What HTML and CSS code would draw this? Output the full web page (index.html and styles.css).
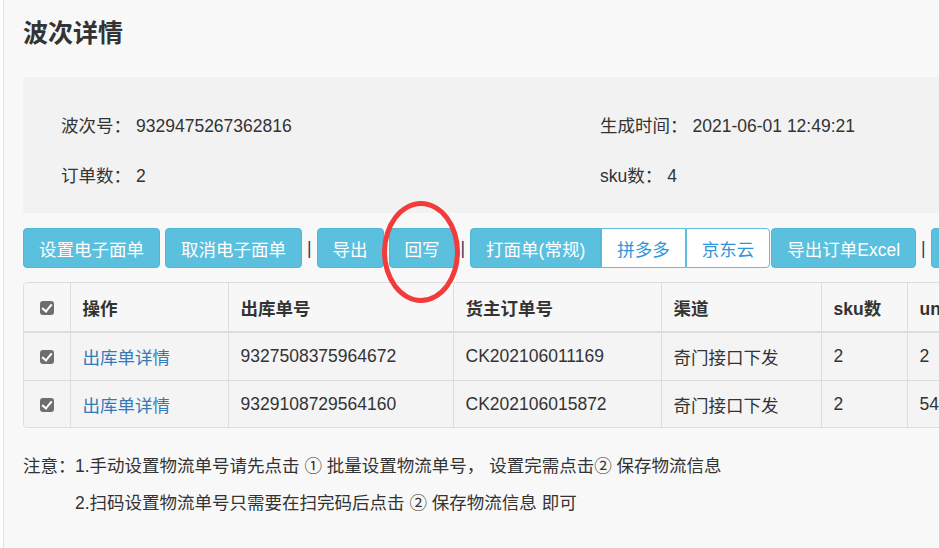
FILE: index.html
```html
<!DOCTYPE html>
<html lang="zh-CN">
<head>
    <meta charset="UTF-8">
    <meta name="viewport" content="width=device-width, initial-scale=1.0">
    <title>波次详情</title>
    <link rel="stylesheet" href="styles.css">
</head>
<body>
    <div class="page">
        <h1 class="title">波次详情</h1>

        <div class="info">
            <div class="info-item"><span class="label">波次号：</span>9329475267362816</div>
            <div class="info-item"><span class="label">生成时间：</span>2021-06-01 12:49:21</div>
            <div class="info-item"><span class="label">订单数：</span>2</div>
            <div class="info-item"><span class="label">sku数：</span>4</div>
        </div>

        <div class="toolbar">
            <button class="btn">设置电子面单</button>
            <button class="btn">取消电子面单</button>
            <span class="sep">|</span>
            <button class="btn">导出</button>
            <button class="btn">回写</button>
            <span class="sep">|</span>
            <div class="btn-group">
                <button class="btn">打面单(常规)</button>
                <button class="btn btn-plain">拼多多</button>
                <button class="btn btn-plain">京东云</button>
            </div>
            <button class="btn btn-join">导出订单Excel</button>
            <span class="sep">|</span>
            <button class="btn">批量设置物流单号</button>
        </div>

        <div class="table-wrap">
            <table class="grid">
                <thead>
                    <tr>
                        <th class="col-check"><span class="check"></span></th>
                        <th class="col-op">操作</th>
                        <th class="col-out">出库单号</th>
                        <th class="col-owner">货主订单号</th>
                        <th class="col-channel">渠道</th>
                        <th class="col-sku">sku数</th>
                        <th>unit数</th>
                    </tr>
                </thead>
                <tbody>
                    <tr>
                        <td class="col-check"><span class="check"></span></td>
                        <td><a href="#" class="link">出库单详情</a></td>
                        <td>9327508375964672</td>
                        <td>CK202106011169</td>
                        <td>奇门接口下发</td>
                        <td>2</td>
                        <td>2</td>
                    </tr>
                    <tr>
                        <td class="col-check"><span class="check"></span></td>
                        <td><a href="#" class="link">出库单详情</a></td>
                        <td>9329108729564160</td>
                        <td>CK202106015872</td>
                        <td>奇门接口下发</td>
                        <td>2</td>
                        <td>54</td>
                    </tr>
                </tbody>
            </table>
        </div>

        <div class="notes">
            <span class="notes-label">注意：</span>
            <div class="notes-list">
                <div>1.手动设置物流单号请先点击 ① 批量设置物流单号， 设置完需点击② 保存物流信息</div>
                <div>2.扫码设置物流单号只需要在扫完码后点击 ② 保存物流信息 即可</div>
            </div>
        </div>

        <div class="mark"></div>
    </div>
</body>
</html>
```

FILE: styles.css
```css
body {
    margin: 0;
    background: #ffffff;
    overflow: hidden;
    font-family: "Liberation Sans", "Noto Sans CJK SC", sans-serif;
    font-size: 17.5px;
    color: #333333;
}
.page {
    position: relative;
    margin-left: 3px;
    border-left: 1px solid #e2e2e2;
    background: #f8f8f8;
    min-height: 100vh;
    padding: 18px 0 0 19px;
    box-sizing: border-box;
}
.title {
    margin: 0;
    font-size: 25px;
    line-height: 30px;
    font-weight: bold;
    color: #333333;
}
.info {
    margin-top: 29px;
    background: #f2f2f2;
    height: 136px;
    box-sizing: border-box;
    padding: 24px 0 12px 38px;
    display: grid;
    grid-template-columns: 539px 1fr;
    grid-auto-rows: 50px;
    width: 1100px;
}
.info-item {
    line-height: 50px;
    white-space: nowrap;
}
.label {
    margin-right: 5px;
}
.toolbar {
    margin-top: 15px;
    display: flex;
    align-items: center;
    gap: 5px;
    white-space: nowrap;
    width: 1200px;
}
.btn {
    height: 40px;
    padding: 0 15px;
    font-family: inherit;
    font-size: 17.5px;
    color: #ffffff;
    background: #5bc0de;
    border: 1px solid #4fb6d6;
    border-radius: 4px;
    flex-shrink: 0;
}
.btn-group {
    display: flex;
}
.btn-group .btn {
    border-radius: 0;
}
.btn-group .btn:first-child {
    border-radius: 4px 0 0 4px;
}
.btn-group .btn:last-child {
    border-radius: 0 4px 4px 0;
}
.btn-plain {
    background: #ffffff;
    color: #2f95d8;
    border-color: #5bc0de;
}
.btn-join {
    margin-left: -4px;
}
.sep {
    color: #333a66;
}
.table-wrap {
    margin-top: 14px;
    width: 1100px;
    border: 1px solid #dddddd;
    border-radius: 4px;
    overflow: hidden;
    background: #f5f5f5;
}
.grid {
    width: 100%;
    border-collapse: collapse;
}
.grid th,
.grid td {
    text-align: left;
    padding: 0 12px;
    border-left: 1px solid #dddddd;
    white-space: nowrap;
}
.grid th:first-child,
.grid td:first-child {
    border-left: none;
}
.grid th {
    height: 48px;
    font-weight: bold;
    background: #f7f7f7;
    border-bottom: 2px solid #dddddd;
}
.grid td {
    height: 46px;
    border-top: 1px solid #dddddd;
    background: #f4f4f4;
}
.grid tbody tr:first-child td {
    border-top: none;
    height: 47px;
}
.col-check {
    width: 46px;
    box-sizing: border-box;
    text-align: center !important;
    padding: 0 !important;
}
.col-op {
    width: 133px;
}
.col-out {
    width: 200px;
}
.col-owner {
    width: 183px;
}
.col-channel {
    width: 135px;
}
.col-sku {
    width: 61px;
}
.check {
    display: inline-block;
    width: 14px;
    height: 14px;
    border-radius: 3px;
    background: #6e6e6e;
    vertical-align: middle;
    position: relative;
}
.check::after {
    content: "";
    position: absolute;
    left: 4px;
    top: 1px;
    width: 4px;
    height: 8px;
    border: solid #ffffff;
    border-width: 0 2px 2px 0;
    transform: rotate(40deg);
}
.link {
    color: #337ab7;
    text-decoration: none;
}
.notes {
    margin-top: 20px;
    display: flex;
    line-height: 37px;
    white-space: nowrap;
}
.notes-label {
    width: 52px;
    flex-shrink: 0;
}
.mark {
    position: absolute;
    left: 378px;
    top: 201px;
    width: 78px;
    height: 102px;
    box-sizing: border-box;
    border: 5px solid #f23b3b;
    border-radius: 50%;
}
```
